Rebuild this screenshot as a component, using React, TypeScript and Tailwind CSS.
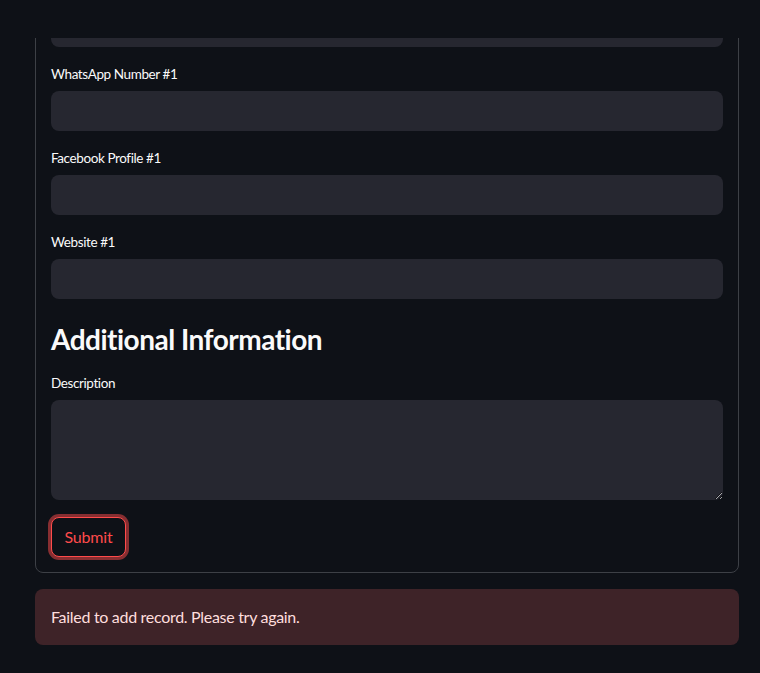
import React from "react";

const font = { fontFamily: "Lato, 'Liberation Sans', sans-serif" };

function Field({ label }: { label: string }) {
  return (
    <div className="flex flex-col">
      <label className="h-[28px] pt-[1px] pb-[6px] text-[13.5px] leading-[21px] font-normal tracking-[-0.4px] text-[#fafafa]">
        {label}
      </label>
      <input
        type="text"
        className="h-[40px] w-full rounded-lg bg-[#262730] px-3 text-[16px] text-[#fafafa] outline-none"
      />
    </div>
  );
}

export default function App() {
  return (
    <div className="min-h-[673px] bg-[#0e1117]" style={font}>
      {/* header strip overlaying the scrolled form */}
      <div className="h-[38px] bg-[#0e1117]" />
      <div className="overflow-hidden px-[35px] pb-[29px]">
        <form
          className="-mt-[32px] flex w-[704px] flex-col gap-4 rounded-lg border border-[#3d4046] px-[15px] pb-[15px] pt-0"
          onSubmit={(e) => e.preventDefault()}
        >
          <input
            type="text"
            className="h-[40px] w-full rounded-lg bg-[#262730] outline-none"
          />
          <Field label="WhatsApp Number #1" />
          <Field label="Facebook Profile #1" />
          <Field label="Website #1" />
          <h3 className="h-[41px] pt-[7px] text-[28px] leading-[34px] font-bold tracking-[-0.5px] text-[#fafafa]">
            Additional Information
          </h3>
          <div className="flex flex-col">
            <label className="h-[28px] pt-[1px] pb-[6px] text-[13.5px] leading-[21px] font-normal tracking-[-0.4px] text-[#fafafa]">
              Description
            </label>
            <textarea className="h-[100px] w-full resize-y rounded-lg bg-[#262730] px-3 py-2 text-[16px] text-[#fafafa] outline-none [color-scheme:dark]" />
          </div>
          <div className="pt-[1px]">
            <button
              type="submit"
              className="h-[40px] w-[75px] rounded-lg border border-[#ff4b4b] bg-[#0e1117] text-[16px] tracking-[-0.2px] text-[#ff4b4b] shadow-[0_0_0_3px_rgba(255,75,75,0.5)]"
            >
              Submit
            </button>
          </div>
        </form>
        <div className="mt-4 w-[704px] rounded-lg bg-[#3e2328] px-4 py-4 text-[16px] leading-[24px] tracking-[-0.3px] text-[#ffdede]">
          Failed to add record. Please try again.
        </div>
      </div>
    </div>
  );
}
